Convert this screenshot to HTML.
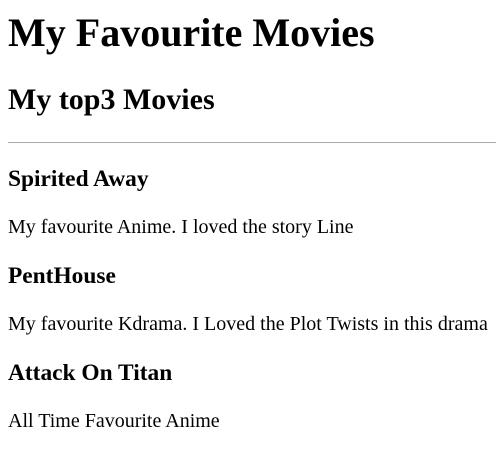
<!DOCTYPE html>
<html>
<head>
<meta charset="utf-8">
<style>
html { font-size: 20px; }
body { font-family: "Liberation Serif", serif; font-size: 20px; margin: 0 0 0 8px; background: #fff; color: #000; }
h1 { font-size: 40px; margin: 9px 0 26.8px; }
h2 { font-size: 30px; margin: 26.8px 0 24.9px; }
h3 { font-size: 23.4px; margin: 23.4px 0; }
p { margin: 20px 0; }
hr { margin: 10px 0; border: 0; border-top: 1px solid #aaa; height: 0; }
</style>
</head>
<body>
<h1>My Favourite Movies</h1>
<h2>My top3 Movies</h2>
<hr>
<h3>Spirited Away</h3>
<p>My favourite Anime. I loved the story Line</p>
<h3>PentHouse</h3>
<p>My favourite Kdrama. I Loved the Plot Twists in this drama</p>
<h3>Attack On Titan</h3>
<p>All Time Favourite Anime</p>
</body>
</html>
